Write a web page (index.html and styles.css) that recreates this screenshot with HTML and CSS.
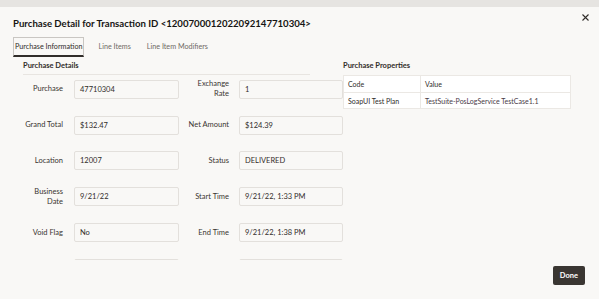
FILE: index.html
```html
<!DOCTYPE html>
<html>
<head>
    <title>Purchase Detail</title>
    <link rel="stylesheet" href="styles.css">
</head>
<body>
    <div class="backdrop"></div>
    <div class="dialog">
        <div class="dialog-header">
            <h1>Purchase Detail for Transaction ID &lt;1200700012022092147710304&gt;</h1>
            <svg class="close" width="7" height="7" viewBox="0 0 7 7">
                <path d="M0.5 0.5 L6.5 6.5 M6.5 0.5 L0.5 6.5" stroke="#312d2a" stroke-width="1.1" fill="none"/>
            </svg>
        </div>

        <div class="tabs">
            <span class="tab selected">Purchase Information</span>
            <span class="tab">Line Items</span>
            <span class="tab">Line Item Modifiers</span>
        </div>

        <div class="content">
            <div class="details">
                <h2 class="section-title ruled">Purchase Details</h2>
                <div class="form-grid">
                    <label>Purchase</label>
                    <div class="field">47710304</div>
                    <label class="second">Exchange<br>Rate</label>
                    <div class="field">1</div>

                    <label>Grand Total</label>
                    <div class="field">$132.47</div>
                    <label class="second">Net Amount</label>
                    <div class="field">$124.39</div>

                    <label>Location</label>
                    <div class="field">12007</div>
                    <label class="second">Status</label>
                    <div class="field">DELIVERED</div>

                    <label>Business<br>Date</label>
                    <div class="field">9/21/22</div>
                    <label class="second">Start Time</label>
                    <div class="field">9/21/22, 1:33 PM</div>

                    <label>Void Flag</label>
                    <div class="field">No</div>
                    <label class="second">End Time</label>
                    <div class="field">9/21/22, 1:38 PM</div>

                    <label></label>
                    <div class="field"></div>
                    <label class="second"></label>
                    <div class="field"></div>
                </div>
            </div>

            <div class="properties">
                <h2 class="section-title">Purchase Properties</h2>
                <table>
                    <thead>
                        <tr>
                            <th>Code</th>
                            <th>Value</th>
                        </tr>
                    </thead>
                    <tbody>
                        <tr>
                            <td>SoapUI Test Plan</td>
                            <td class="value">TestSuite-PosLogService TestCase1.1</td>
                        </tr>
                    </tbody>
                </table>
            </div>
        </div>

        <div class="dialog-footer">
            <button class="done">Done</button>
        </div>
    </div>
</body>
</html>
```

FILE: styles.css
```css
/* Purchase detail dialog */

body {
    font-family: Lato, "Open Sans", sans-serif;
    background-color: #f9f8f6;
    color: #312d2a;
    margin: 0;
    padding: 0;
}

.backdrop {
    height: 7px;
    background-color: #e6e4e1;
}

.dialog {
    background-color: #f9f8f6;
}

.dialog-header {
    display: flex;
    justify-content: space-between;
    align-items: flex-start;
    padding: 10px 10px 0 13px;
}

h1 {
    font-size: 9.6px;
    font-weight: 700;
    color: #161513;
    margin: 0;
    line-height: 14px;
}

.close {
    margin-top: -3px;
}

.tabs {
    display: flex;
    gap: 12px;
    padding: 6px 13px 0;
}

.tab {
    font-size: 7.2px;
    line-height: 17px;
    color: #6f6a65;
    padding: 0 1px;
    border: 1px solid transparent;
    border-bottom: 2px solid transparent;
}

.tab.selected {
    color: #312d2a;
    border-color: #c9c6c2;
    border-bottom-color: #312d2a;
}

.content {
    display: flex;
    height: 203px;
    overflow: hidden;
}

.details {
    width: 343px;
}

.section-title {
    font-size: 7.5px;
    font-weight: 700;
    color: #312d2a;
    margin: 0;
    padding-top: 3px;
    line-height: 11px;
}

.ruled {
    width: 287px;
    margin-left: 23px;
    padding-bottom: 3px;
    border-bottom: 1px solid #e8e5e1;
    margin-bottom: 4px;
}

.form-grid {
    display: grid;
    grid-template-columns: 74px 105px 60px 104px;
    row-gap: 16.5px;
    align-items: center;
}

.form-grid label {
    font-size: 7.5px;
    line-height: 10px;
    text-align: right;
    color: #3a3531;
    padding-right: 11px;
}

.form-grid label.second {
    padding-right: 10px;
}

.field {
    height: 17px;
    line-height: 17px;
    font-size: 7.5px;
    color: #312d2a;
    padding: 0 5px;
    border: 1px solid #e3e0dc;
    border-radius: 2px;
}

.properties {
    flex: 1;
}

table {
    width: 228px;
    border-collapse: collapse;
    margin-top: 4px;
    background-color: #fff;
    font-size: 7px;
}

th, td {
    text-align: left;
    padding: 0 4px;
    border: 1px solid #ebe8e4;
    font-weight: 400;
    color: #312d2a;
}

th {
    height: 16px;
}

td {
    height: 15px;
}

th:first-child, td:first-child {
    width: 68px;
}

td.value {
    color: #4a3a46;
}

.dialog-footer {
    display: flex;
    justify-content: flex-end;
    padding: 6px 14px 0;
}

.done {
    font-family: inherit;
    font-size: 7.5px;
    font-weight: 700;
    color: #fff;
    background-color: #3a3632;
    border: none;
    border-radius: 2px;
    height: 19px;
    padding: 0 7px;
    cursor: pointer;
}
```
